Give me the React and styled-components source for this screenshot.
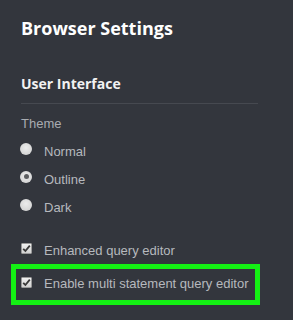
import React from "react";
import styled, { createGlobalStyle } from "styled-components";

const GlobalStyle = createGlobalStyle`
  html, body {
    margin: 0;
    padding: 0;
    background: #33363d;
  }
`;

const Panel = styled.div`
  width: 293px;
  height: 320px;
  box-sizing: border-box;
  padding: 16px 35px 0 21px;
  background: #33363d;
  overflow: hidden;
`;

const Title = styled.h1`
  margin: 0;
  font-family: "Open Sans", sans-serif;
  font-size: 18px;
  line-height: 24px;
  font-weight: 700;
  color: #ffffff;
`;

const SectionTitle = styled.h2`
  margin: 34px 0 0;
  padding-bottom: 9px;
  border-bottom: 1px solid #464950;
  font-family: "Open Sans", sans-serif;
  font-size: 14px;
  line-height: 20px;
  font-weight: 700;
  color: #f2f2f2;
`;

const FieldLabel = styled.div`
  margin-top: 12px;
  font-family: "Liberation Sans", Arial, sans-serif;
  font-size: 13px;
  line-height: 16px;
  color: #a9acb1;
`;

const OptionList = styled.div`
  display: flex;
  flex-direction: column;
  margin-top: ${(p) => p.$gap}px;
`;

const Row = styled.label`
  display: flex;
  align-items: flex-start;
  height: ${(p) => p.$height}px;
  margin-left: -1px;
  font-family: "Liberation Sans", Arial, sans-serif;
  font-size: 13px;
  color: #b6b9be;
  ${(p) =>
    p.$highlight &&
    `
    margin-left: -7px;
    margin-right: 1px;
    padding-left: 6px;
    outline: 5px solid #14f014;
    outline-offset: -2px;
  `}
`;

const Text = styled.span`
  line-height: 16px;
  margin-top: ${(p) => p.$top}px;
`;

const Radio = styled.span`
  flex: none;
  width: 12px;
  height: 12px;
  margin: 4.5px 12px 0 0;
  border-radius: 50%;
  background: radial-gradient(circle at 50% 40%, #ececec 0%, #d6d6d6 70%, #c6c6c6 100%);
  display: flex;
  align-items: center;
  justify-content: center;
  &::after {
    content: "";
    width: 5px;
    height: 5px;
    border-radius: 50%;
    background: ${(p) => (p.$checked ? "#5c5d60" : "transparent")};
  }
`;

const Box = styled.span`
  flex: none;
  box-sizing: border-box;
  width: 11px;
  height: 11px;
  margin: ${(p) => p.$top}px 12px 0 1px;
  border: 1px solid #9a9a9a;
  border-radius: 1px;
  background: linear-gradient(#f0f0f0, #d2d2d2);
  display: flex;
  align-items: center;
  justify-content: center;
`;

const Check = () => (
  <svg width="9" height="9" viewBox="0 0 9 9">
    <path d="M1.2 4.8 L3.4 7 L7.8 1.6" fill="none" stroke="#3a3a3a" strokeWidth="1.8" />
  </svg>
);

const themes = [
  { label: "Normal", checked: false },
  { label: "Outline", checked: true },
  { label: "Dark", checked: false },
];

export default function App() {
  return (
    <>
      <GlobalStyle />
      <Panel>
        <Title>Browser Settings</Title>
        <SectionTitle>User Interface</SectionTitle>
        <FieldLabel>Theme</FieldLabel>
        <OptionList $gap={6}>
          {themes.map((t) => (
            <Row key={t.label} $height={28}>
              <Radio $checked={t.checked} />
              <Text $top={6}>{t.label}</Text>
            </Row>
          ))}
        </OptionList>
        <OptionList $gap={13}>
          <Row $height={31.5}>
            <Box $top={8}>
              <Check />
            </Box>
            <Text $top={8}>Enhanced query editor</Text>
          </Row>
          <Row $height={35} $highlight>
            <Box $top={10}>
              <Check />
            </Box>
            <Text $top={9}>Enable multi statement query editor</Text>
          </Row>
        </OptionList>
      </Panel>
    </>
  );
}
